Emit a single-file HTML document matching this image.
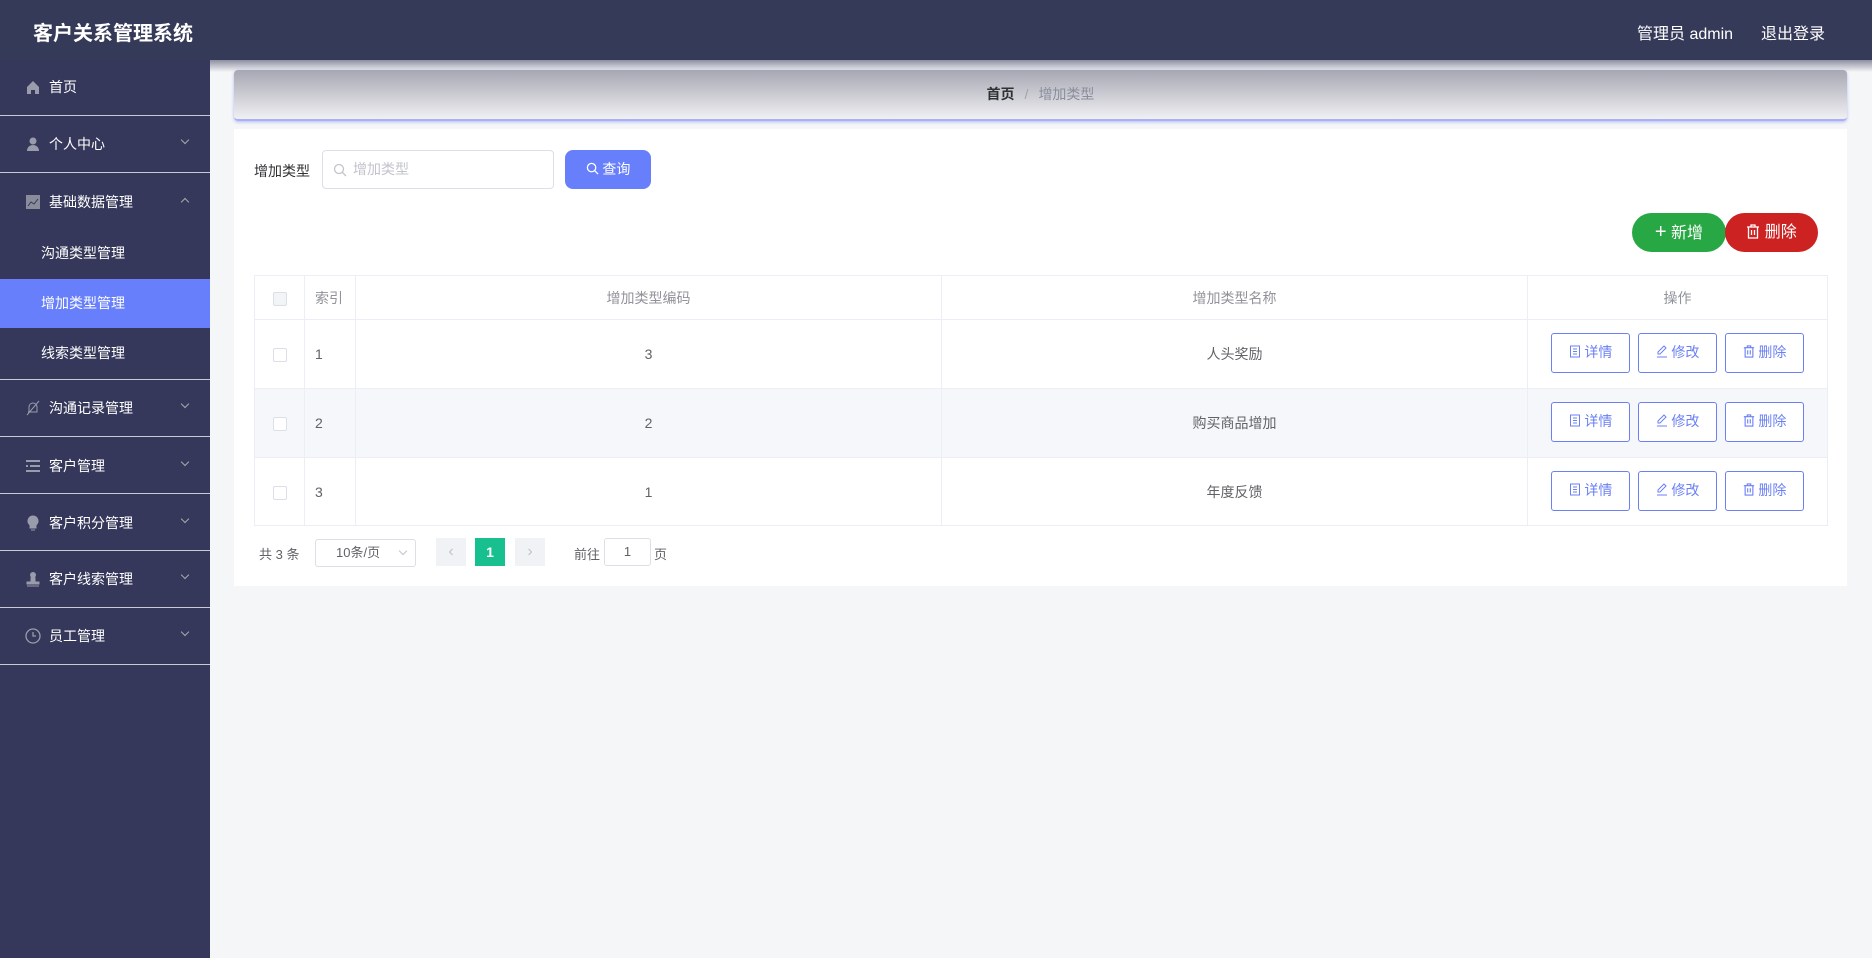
<!DOCTYPE html>
<html><head><meta charset="utf-8"><style>
*{margin:0;padding:0;box-sizing:border-box}
body{width:1872px;height:958px;overflow:hidden;background:#f5f6f8;font-family:"Liberation Sans","Noto Sans CJK SC",sans-serif;position:relative}
.hd{position:absolute;left:0;top:0;width:1872px;height:60px;background:#363a59;color:#fff}
.hd .t{position:absolute;left:33px;top:17px;font-size:20px;font-weight:bold}
.hd .r{position:absolute;top:20px;font-size:16px}
.sb{position:absolute;left:0;top:60px;width:210px;height:898px;background:#35385a;color:#fff;font-size:14px}
.it{position:absolute;left:0;width:210px;height:20px;line-height:20px}
.it .tx{position:absolute;left:49px}
.it .ic{position:absolute;left:25px;top:2px;width:16px;height:16px}
.it .ar{position:absolute;left:182px;top:3px;width:6px;height:6px;border-right:1px solid #aaa;border-bottom:1px solid #aaa;transform:rotate(45deg)}
.it .up{transform:rotate(-135deg);top:7px}
.sep{position:absolute;left:0;width:210px;height:1px;background:#c9cad3}
.sub{position:absolute;left:41px;font-size:14px}
.act{position:absolute;left:0;top:219px;width:210px;height:49px;background:#677ffb}
.topsh{position:absolute;left:210px;top:60px;width:1662px;height:12px;background:linear-gradient(#8d8fa0,#f5f6f8)}
.bc{position:absolute;left:234px;top:70px;width:1613px;height:51px;border-radius:4px;background:linear-gradient(#a6a7b2,#f0f0f3);border-bottom:2px solid #a8b2f3;box-shadow:0 1px 3px #b0b8f5;text-align:center;font-size:14px;line-height:48px}
.card{position:absolute;left:234px;top:129px;width:1613px;height:457px;background:#fff}
.abs{position:absolute}
.btn{position:absolute;border:1px solid #6b80f4;border-radius:3px;color:#6b80f4;font-size:14px;text-align:center;line-height:37px;background:#fff}
table{position:absolute;left:254px;top:275px;width:1574px;border-collapse:collapse;font-size:14px;color:#606266}
td{border:1px solid #ebeef5;text-align:center}
.cb{display:inline-block;width:14px;height:14px;border:1px solid #dcdfe6;border-radius:2px;background:#fff;vertical-align:middle}
</style></head><body>
<div class="hd"><div class="t">客户关系管理系统</div><div class="r" style="left:1637px">管理员 admin</div><div class="r" style="left:1761px">退出登录</div></div>
<div class="sb">
<div class="act"></div>
<div class="it" style="top:17px"><svg class="ic" viewBox="0 0 16 16"><path d="M2 8L8 2l6 6v7h-4v-4H6v4H2z" fill="#9a9cab"/></svg><span class="tx">首页</span></div>
<div class="sep" style="top:55px"></div>
<div class="it" style="top:74px"><svg class="ic" viewBox="0 0 16 16"><circle cx="8" cy="5" r="3.5" fill="#9a9cab"/><path d="M2 15c0-4 3-6 6-6s6 2 6 6z" fill="#9a9cab"/></svg><span class="tx">个人中心</span><span class="ar"></span></div>
<div class="sep" style="top:112px"></div>
<div class="it" style="top:132px"><svg class="ic" viewBox="0 0 16 16"><rect x="1" y="1" width="14" height="14" fill="#8a8c9b"/><path d="M3 12l3-4 3 2 4-5" stroke="#35385a" fill="none"/></svg><span class="tx">基础数据管理</span><span class="ar up"></span></div>
<div class="sub" style="top:183px">沟通类型管理</div>
<div class="sub" style="top:233px">增加类型管理</div>
<div class="sub" style="top:283px">线索类型管理</div>
<div class="sep" style="top:319px"></div>
<div class="it" style="top:338px"><svg class="ic" viewBox="0 0 16 16"><path d="M4 12V7a4 4 0 018 0v5H3M2 15L14 1" stroke="#9a9cab" fill="none"/></svg><span class="tx">沟通记录管理</span><span class="ar"></span></div>
<div class="sep" style="top:376px"></div>
<div class="it" style="top:396px"><svg class="ic" viewBox="0 0 16 16"><path d="M1 3h14M5 8h10M1 13h14M1 8h2" stroke="#9a9cab" stroke-width="2"/></svg><span class="tx">客户管理</span><span class="ar"></span></div>
<div class="sep" style="top:433px"></div>
<div class="it" style="top:453px"><svg class="ic" viewBox="0 0 16 16"><path d="M8 1a5 5 0 00-3 9v3h6v-3a5 5 0 00-3-9zM6 15h4" fill="#9a9cab" stroke="#9a9cab"/></svg><span class="tx">客户积分管理</span><span class="ar"></span></div>
<div class="sep" style="top:490px"></div>
<div class="it" style="top:509px"><svg class="ic" viewBox="0 0 16 16"><circle cx="8" cy="4" r="3" fill="#9a9cab"/><path d="M6 7h4v4h4v2H2v-2h4zM2 15h12" fill="#9a9cab" stroke="#9a9cab"/></svg><span class="tx">客户线索管理</span><span class="ar"></span></div>
<div class="sep" style="top:547px"></div>
<div class="it" style="top:566px"><svg class="ic" viewBox="0 0 16 16"><circle cx="8" cy="8" r="7" stroke="#9a9cab" fill="none" stroke-width="1.3"/><path d="M8 4v4h3" stroke="#9a9cab" fill="none" stroke-width="1.3"/></svg><span class="tx">员工管理</span><span class="ar"></span></div>
<div class="sep" style="top:604px"></div>
</div>
<div class="topsh"></div>
<div class="bc"><b style="color:#303133">首页</b><span style="color:#a0a2b0;margin:0 10px">/</span><span style="color:#8a8d9c">增加类型</span></div>
<div class="card"></div>
<div class="abs" style="left:254px;top:161px;font-size:14px;color:#303133">增加类型</div>
<div class="abs" style="left:322px;top:150px;width:232px;height:39px;border:1px solid #dcdfe6;border-radius:4px;font-size:14px;color:#c0c4cc;line-height:37px;padding-left:30px"><svg class="abs" style="left:10px;top:12px" width="14" height="14" viewBox="0 0 14 14"><circle cx="6" cy="6" r="4.5" stroke="#c0c4cc" fill="none" stroke-width="1.3"/><path d="M9.5 9.5L13 13" stroke="#c0c4cc" stroke-width="1.3"/></svg>增加类型</div>
<div class="abs" style="left:565px;top:150px;width:86px;height:39px;background:#677ffb;border-radius:8px;color:#fff;font-size:14px;line-height:39px;text-align:center"><svg width="13" height="13" viewBox="0 0 14 14" style="vertical-align:-1px"><circle cx="6" cy="6" r="4.5" stroke="#fff" fill="none" stroke-width="1.4"/><path d="M9.5 9.5L13 13" stroke="#fff" stroke-width="1.4"/></svg> 查询</div>
<div class="abs" style="left:1632px;top:213px;width:94px;height:39px;background:#28a745;border-radius:20px;color:#fff;font-size:16px;line-height:39px;text-align:center"><span style="font-size:20px">+</span> 新增</div>
<div class="abs" style="left:1725px;top:213px;width:93px;height:39px;background:#cc2222;border-radius:20px;color:#fff;font-size:16px;line-height:39px;text-align:center"><svg width="14" height="15" viewBox="0 0 14 15" style="vertical-align:-2px"><path d="M1 3h12M5 3V1h4v2M2.5 3v11h9V3M5.5 6v5M8.5 6v5" stroke="#fff" fill="none" stroke-width="1.3"/></svg> 删除</div>
<table>
<tr style="height:44px;color:#909399"><td style="width:50px"><span class="cb" style="background:#f2f4f8"></span></td><td style="width:51px;text-align:left;padding-left:10px">索引</td><td style="width:586px">增加类型编码</td><td style="width:586px">增加类型名称</td><td>操作</td></tr>
<tr style="height:69px"><td><span class="cb"></span></td><td style="text-align:left;padding-left:10px">1</td><td>3</td><td>人头奖励</td><td></td></tr>
<tr style="height:69px;background:#f5f7fa"><td><span class="cb"></span></td><td style="text-align:left;padding-left:10px">2</td><td>2</td><td>购买商品增加</td><td></td></tr>
<tr style="height:68px"><td><span class="cb"></span></td><td style="text-align:left;padding-left:10px">3</td><td>1</td><td>年度反馈</td><td></td></tr>
</table>
<div id="ops"></div>
<script>
var h='';[333,402,471].forEach(function(y){
h+='<div class="btn" style="left:1551px;top:'+y+'px;width:79px;height:40px"><svg width="12" height="13" viewBox="0 0 12 13" style="vertical-align:-1px"><path d="M1.5 1h9v11h-9zM4 4h4M4 6.5h4M4 9h4" stroke="#6b80f4" fill="none"/></svg> 详情</div>';
h+='<div class="btn" style="left:1638px;top:'+y+'px;width:79px;height:40px"><svg width="12" height="13" viewBox="0 0 12 13" style="vertical-align:-1px"><path d="M8 1l2 2-6 6H2V7zM1 12h10" stroke="#6b80f4" fill="none"/></svg> 修改</div>';
h+='<div class="btn" style="left:1725px;top:'+y+'px;width:79px;height:40px"><svg width="12" height="13" viewBox="0 0 14 15" style="vertical-align:-1px"><path d="M1 3h12M5 3V1h4v2M2.5 3v11h9V3M5.5 6v5M8.5 6v5" stroke="#6b80f4" fill="none" stroke-width="1.3"/></svg> 删除</div>';});
document.getElementById('ops').innerHTML=h;
</script>
<div class="abs" style="left:259px;top:544px;font-size:13px;color:#606266">共 3 条</div>
<div class="abs" style="left:315px;top:539px;width:101px;height:28px;border:1px solid #dcdfe6;border-radius:3px;font-size:13px;color:#606266;line-height:26px;padding-left:20px">10条/页<span class="abs" style="left:84px;top:8px;width:6px;height:6px;border-right:1px solid #c0c4cc;border-bottom:1px solid #c0c4cc;transform:rotate(45deg)"></span></div>
<div class="abs" style="left:436px;top:538px;width:30px;height:28px;background:#f0f2f5;color:#c0c4cc;text-align:center;line-height:28px;font-size:16px">‹</div>
<div class="abs" style="left:475px;top:538px;width:30px;height:28px;background:#18c08f;color:#fff;text-align:center;line-height:28px;font-size:14px;font-weight:bold">1</div>
<div class="abs" style="left:515px;top:538px;width:30px;height:28px;background:#f0f2f5;color:#c0c4cc;text-align:center;line-height:28px;font-size:16px">›</div>
<div class="abs" style="left:574px;top:544px;font-size:13px;color:#606266">前往</div>
<div class="abs" style="left:604px;top:538px;width:47px;height:28px;border:1px solid #dcdfe6;border-radius:3px;font-size:13px;color:#606266;text-align:center;line-height:26px">1</div>
<div class="abs" style="left:654px;top:544px;font-size:13px;color:#606266">页</div>
</body></html>
